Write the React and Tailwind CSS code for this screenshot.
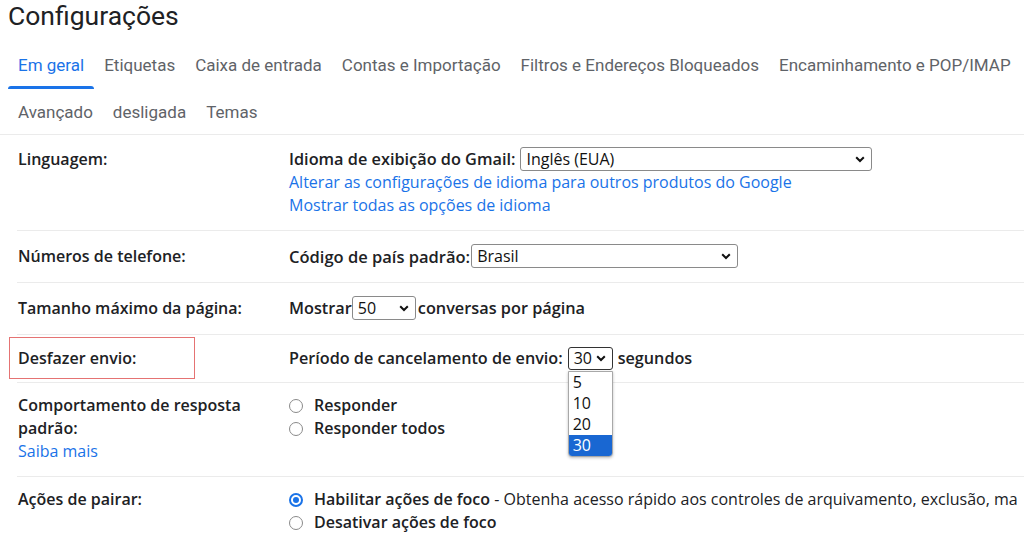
import React from "react";

function Chevron() {
  return (
    <svg width="10" height="7" viewBox="0 0 10 7" className="shrink-0">
      <path d="M1.2 1.2 5 5 8.8 1.2" fill="none" stroke="#111" strokeWidth="2" />
    </svg>
  );
}

function Select({ value, className, dark }) {
  return (
    <div
      className={`flex items-center justify-between bg-white border rounded-[3px] pl-[5px] pr-[6px] font-normal text-[16px] text-[#111] ${
        dark ? "border-[#333]" : "border-[#8a8a8a]"
      } ${className}`}
    >
      <span>{value}</span>
      <Chevron />
    </div>
  );
}

function Radio({ checked }) {
  if (checked) {
    return (
      <span className="w-[14px] h-[14px] rounded-full border-2 border-[#1a73e8] flex items-center justify-center shrink-0">
        <span className="w-[6px] h-[6px] rounded-full bg-[#1a73e8]" />
      </span>
    );
  }
  return <span className="w-[14px] h-[14px] rounded-full border border-[#8a8a8a] bg-white shrink-0" />;
}

function Tab({ label, active }) {
  return (
    <div className={`relative px-[10px] flex items-center ${active ? "text-[#1a73e8]" : "text-[#5f6368]"}`}>
      {label}
      {active && <span className="absolute left-0 right-0 bottom-0 h-[3px] rounded-t-[3px] bg-[#1a73e8]" />}
    </div>
  );
}

function Row({ label, children, className = "", extra }) {
  return (
    <div className={`relative ml-[17px] border-t border-[#ebebeb] flex ${className}`}>
      {extra}
      <div className="w-[272px] shrink-0 pl-[1px] font-semibold text-[#202124]">{label}</div>
      <div className="flex-1 min-w-0">{children}</div>
    </div>
  );
}

export default function App() {
  const tabs1 = [
    "Em geral",
    "Etiquetas",
    "Caixa de entrada",
    "Contas e Importação",
    "Filtros e Endereços Bloqueados",
    "Encaminhamento e POP/IMAP",
  ];
  const tabs2 = ["Avançado", "desligada", "Temas"];

  return (
    <div className="w-[1024px] h-[546px] overflow-hidden bg-white whitespace-nowrap">
      <div className="h-[41px] pl-[8px] text-[26.5px] leading-[32px] text-[#202124] font-['Roboto',sans-serif]">
        Configurações
      </div>

      <div className="pl-[8px] text-[17px] font-['Roboto',sans-serif]">
        <div className="flex h-[48px] pt-[2px]">
          {tabs1.map((t, i) => (
            <Tab key={t} label={t} active={i === 0} />
          ))}
        </div>
        <div className="flex h-[45px] pt-[3px]">
          {tabs2.map((t) => (
            <Tab key={t} label={t} />
          ))}
        </div>
      </div>

      <div className="border-t border-[#ebebeb] font-['Open_Sans',sans-serif] text-[16px] leading-[23px] text-[#202124]">
        {/* Linguagem */}
        <div className="flex pt-[12px] pb-[13px] ml-[17px]">
          <div className="w-[272px] shrink-0 pl-[1px] font-semibold h-[24px] flex items-center">Linguagem:</div>
          <div className="flex-1">
            <div className="flex items-center h-[24px] font-semibold text-[16.3px]">
              <span>Idioma de exibição do Gmail:</span>
              <Select value="Inglês (EUA)" className="ml-[5px] w-[352px] h-[24px]" />
            </div>
            <div className="text-[#1a73e8]">Alterar as configurações de idioma para outros produtos do Google</div>
            <div className="text-[#1a73e8]">Mostrar todas as opções de idioma</div>
          </div>
        </div>

        {/* Números */}
        <Row label={<div className="h-[24px] flex items-center">Números de telefone:</div>} className="pt-[13px] pb-[14px]">
          <div className="flex items-center h-[24px] font-semibold text-[16.5px]">
            <span>Código de país padrão:</span>
            <Select value="Brasil" className="ml-[1px] w-[267px] h-[24px]" />
          </div>
        </Row>

        {/* Tamanho */}
        <Row label={<div className="h-[24px] flex items-center">Tamanho máximo da página:</div>} className="pt-[13px] pb-[14px]">
          <div className="flex items-center h-[24px] font-semibold text-[16.3px]">
            <span>Mostrar</span>
            <Select value="50" className="w-[64px] h-[24px]" />
            <span className="ml-[2px]">conversas por página</span>
          </div>
        </Row>

        {/* Desfazer envio */}
        <Row
          label={<div className="h-[23px] flex items-center">Desfazer envio:</div>}
          className="pt-[12px] pb-[12px]"
          extra={
            <div className="absolute left-[-8px] top-[2px] w-[186px] h-[42px] border-[1.5px] border-[#e57373]" />
          }
        >
          <div className="relative flex items-center h-[23px] font-semibold text-[16.2px]">
            <span>Período de cancelamento de envio:</span>
            <div className="relative ml-[5px]">
              <Select value="30" dark className="w-[45px] h-[23px] pl-[4px] pr-[5px]" />
              <div className="absolute left-0 top-[24px] w-[45px] z-10 bg-white border border-[#a8a8a8] rounded-b-[4px] overflow-hidden shadow-[0_1px_3px_rgba(0,0,0,0.25)] font-normal text-[16px] text-[#111] leading-[21px]">
                <div className="h-[21px] pl-[4px]">5</div>
                <div className="h-[21px] pl-[4px]">10</div>
                <div className="h-[21px] pl-[4px]">20</div>
                <div className="h-[21px] pl-[4px] bg-[#1967d2] text-white">30</div>
              </div>
            </div>
            <span className="ml-[5px]">segundos</span>
          </div>
        </Row>

        {/* Comportamento */}
        <Row
          label={
            <div>
              <div>Comportamento de resposta</div>
              <div>padrão:</div>
              <div className="font-normal text-[#1a73e8]">Saiba mais</div>
            </div>
          }
          className="pt-[11px] pb-[13px]"
        >
          <div className="font-semibold">
            <div className="flex items-center gap-[11px]">
              <Radio />
              <span>Responder</span>
            </div>
            <div className="flex items-center gap-[11px]">
              <Radio />
              <span>Responder todos</span>
            </div>
          </div>
        </Row>

        {/* Ações de pairar */}
        <Row label="Ações de pairar:" className="pt-[11px]">
          <div className="font-semibold">
            <div className="flex items-center gap-[11px]">
              <Radio checked />
              <span>
                Habilitar ações de foco
                <span className="font-normal"> - Obtenha acesso rápido aos controles de arquivamento, exclusão, ma</span>
              </span>
            </div>
            <div className="flex items-center gap-[11px]">
              <Radio />
              <span>Desativar ações de foco</span>
            </div>
          </div>
        </Row>
      </div>
    </div>
  );
}
